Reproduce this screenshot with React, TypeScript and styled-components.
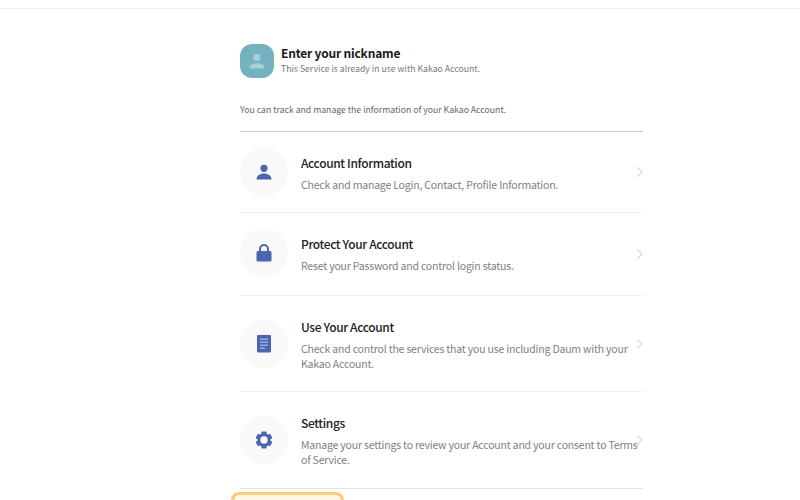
import { createGlobalStyle } from "styled-components";
import styled from "styled-components";
import type { ReactNode } from "react";

const GlobalStyle = createGlobalStyle`
    html, body {
        margin: 0;
        height: 500px;
        overflow: hidden;
        background: #fff;
        font-family: "Noto Sans CJK KR", "Noto Sans", sans-serif;
    }
`;

const TopBar = styled.div`
    height: 8px;
    border-bottom: 1px solid #f0f0f0;
`;

const Main = styled.main`
    width: 403px;
    margin-left: 240px;
`;

const Profile = styled.header`
    display: flex;
    align-items: center;
    gap: 7px;
    margin-top: 35px;
`;

const Avatar = styled.div`
    width: 34px;
    height: 34px;
    display: flex;
    align-items: center;
    justify-content: center;
    background: #74b2bf;
    border-radius: 12px;
`;

const ProfileName = styled.h1`
    margin: -2px 0 0;
    font-size: 12px;
    line-height: 18px;
    font-weight: 700;
    letter-spacing: -0.2px;
    color: #1a1a1a;
`;

const ProfileNote = styled.p`
    margin: 0;
    font-size: 8.7px;
    line-height: 14px;
    color: #777;
`;

const Intro = styled.p`
    margin: 21px 0 0;
    height: 32px;
    font-size: 8.7px;
    line-height: 22px;
    color: #666;
`;

const Menu = styled.ul`
    margin: 0;
    padding: 0;
    list-style: none;
    border-top: 1px solid #c9c9c9;
`;

const Row = styled.li<{ $last?: boolean; $bottom: number }>`
    position: relative;
    display: flex;
    align-items: center;
    gap: 13px;
    padding: 20px 0 ${({ $bottom }) => $bottom}px;
    border-bottom: 1px solid ${({ $last }) => ($last ? "#e2e2e2" : "#f0f0f0")};
`;

const IconCircle = styled.div`
    flex: none;
    width: 48px;
    height: 48px;
    margin: -4px 0;
    display: flex;
    align-items: center;
    justify-content: center;
    background: #f9f9f9;
    border-radius: 50%;
`;

const RowText = styled.div`
    width: 340px;
`;

const RowTitle = styled.h2`
    margin: 0;
    font-size: 12px;
    line-height: 22px;
    font-weight: 500;
    letter-spacing: -0.37px;
    color: #222;
`;

const RowNote = styled.p`
    margin: 0;
    padding-top: 3px;
    font-size: 10.5px;
    line-height: 15px;
    letter-spacing: -0.19px;
    color: #808080;
`;

const Chevron = styled.svg`
    position: absolute;
    right: 0;
    top: 50%;
    transform: translateY(-50%);
`;

const Highlight = styled.div`
    width: 113px;
    height: 8px;
    margin: 3px 0 0 -9px;
    box-sizing: border-box;
    background: #fff6e3;
    border: 3px solid #fbcb7c;
    border-bottom: 0;
    border-radius: 8px 8px 0 0;
`;

const INK = "#4b66ae";

const PersonIcon = () => (
    <svg width="16" height="16" viewBox="0 0 16 16" fill={INK}>
        <circle cx="8" cy="4.3" r="3.6" />
        <path d="M0.5 15.5c0-3.6 3.3-5.9 7.5-5.9s7.5 2.3 7.5 5.9z" />
    </svg>
);

const LockIcon = () => (
    <svg width="16" height="18" viewBox="0 0 16 18">
        <path d="M4 8V5a4 4 0 0 1 8 0v3" fill="none" stroke={INK} strokeWidth="2" />
        <rect x="0.5" y="7" width="15" height="10.5" rx="1.5" fill={INK} />
    </svg>
);

const DocIcon = () => (
    <svg width="14" height="18" viewBox="0 0 14 18">
        <rect width="14" height="17.5" rx="1" fill={INK} />
        <path d="M3 4.2h8M3 7.2h8M3 10.2h8M3 13.2h5" stroke="#c6d0ea" strokeWidth="1" />
    </svg>
);

const GearIcon = () => (
    <svg width="18" height="18" viewBox="0 0 18 18">
        <g fill={INK}>
            {[0, 60, 120, 180, 240, 300].map((angle) => (
                <rect key={angle} x="6.4" y="0.6" width="5.2" height="3.4" rx="1" transform={`rotate(${angle} 9 9)`} />
            ))}
        </g>
        <circle cx="9" cy="9" r="5.2" fill="none" stroke={INK} strokeWidth="3" />
    </svg>
);

const MenuRow = ({ icon, title, note, last, bottom = 20 }: { icon: ReactNode; title: string; note: string; last?: boolean; bottom?: number }) => (
    <Row $last={last} $bottom={bottom}>
        <IconCircle>{icon}</IconCircle>
        <RowText>
            <RowTitle>{title}</RowTitle>
            <RowNote>{note}</RowNote>
        </RowText>
        <Chevron width="7" height="12" viewBox="0 0 7 12" fill="none" stroke="#dcdcdc" strokeWidth="1.2">
            <path d="M1 1l5 5-5 5" />
        </Chevron>
    </Row>
);

export default function App() {
    return (
        <>
            <GlobalStyle />
            <TopBar />
            <Main>
                <Profile>
                    <Avatar>
                        <svg width="16" height="16" viewBox="0 0 16 16" fill="#a5d0d8">
                            <circle cx="8" cy="4.5" r="3.6" />
                            <path d="M0.5 15.5c0-3.4 3.3-5.2 7.5-5.2s7.5 1.8 7.5 5.2z" />
                        </svg>
                    </Avatar>
                    <div>
                        <ProfileName>Enter your nickname</ProfileName>
                        <ProfileNote>This Service is already in use with Kakao Account.</ProfileNote>
                    </div>
                </Profile>
                <Intro>You can track and manage the information of your Kakao Account.</Intro>
                <Menu>
                    <MenuRow icon={<PersonIcon />} title="Account Information" note="Check and manage Login, Contact, Profile Information." />
                    <MenuRow icon={<LockIcon />} title="Protect Your Account" note="Reset your Password and control login status." bottom={22} />
                    <MenuRow icon={<DocIcon />} title="Use Your Account" note="Check and control the services that you use including Daum with your Kakao Account." />
                    <MenuRow icon={<GearIcon />} title="Settings" note="Manage your settings to review your Account and your consent to Terms of Service." bottom={21} last />
                </Menu>
                <Highlight />
            </Main>
        </>
    );
}
